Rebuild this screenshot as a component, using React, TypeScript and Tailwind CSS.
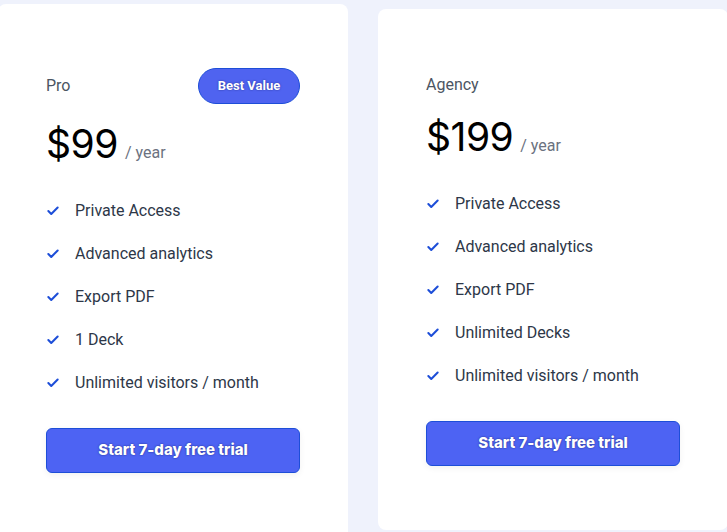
import { Check } from 'lucide-react';

/* ── Plan data ── */
const PLANS = [
  {
    name: 'Pro',
    price: '$99',
    badge: 'Best Value',
    features: ['Private Access', 'Advanced analytics', 'Export PDF', '1 Deck', 'Unlimited visitors / month'],
    card: 'mt-[4px] h-[560px]',
  },
  {
    name: 'Agency',
    price: '$199',
    badge: null,
    features: ['Private Access', 'Advanced analytics', 'Export PDF', 'Unlimited Decks', 'Unlimited visitors / month'],
    card: 'mt-[9px] h-[521px]',
  },
];

function PlanCard({ plan }: { plan: (typeof PLANS)[number] }) {
  return (
    <div className={`w-[350px] shrink-0 rounded-lg bg-white px-12 pt-16 ${plan.card}`}>
      <div className="flex items-center justify-between">
        <span className="text-base leading-6 text-[#4b5563]">{plan.name}</span>
        {plan.badge && (
          <span className="flex h-9 w-[102px] items-center justify-center rounded-full border border-[#1d4ed8] bg-[#4f63f0] text-[13px] font-bold text-white [text-shadow:0_0_2px_rgba(0,0,60,0.5)] [font-family:Roboto,sans-serif]">
            {plan.badge}
          </span>
        )}
      </div>

      <div className="mt-[16px] flex items-baseline">
        <span className="text-[39px] leading-[48px] tracking-[-0.5px] text-black [font-family:Inter,sans-serif]">{plan.price}</span>
        <span className="ml-[7px] text-base text-[#6b7280]">/ year</span>
      </div>

      <ul className="mt-[21px] flex flex-col">
        {plan.features.map((f) => (
          <li key={f} className="flex h-[43px] items-center gap-[15px]">
            <Check className="h-[14px] w-[14px] text-[#1d4ed8]" strokeWidth={3.5} />
            <span className="text-base text-[#2d3748]">{f}</span>
          </li>
        ))}
      </ul>

      <button className="mt-[24px] flex h-[45px] w-full items-center justify-center rounded-md border border-[#1d4ed8] bg-[#4d63f3] text-[15px] font-extrabold text-white shadow-[0_2px_6px_rgba(0,0,0,0.06)] [text-shadow:0_0_2px_rgba(0,0,60,0.6)] [font-family:Inter,sans-serif]">
        Start 7-day free trial
      </button>
    </div>
  );
}

export default function App() {
  return (
    <div className="h-[532px] w-[727px] overflow-hidden bg-[#eff2fc] [font-family:Roboto,sans-serif]">
      <div className="-ml-[2px] flex gap-[30px]">
        {PLANS.map((p) => (
          <PlanCard key={p.name} plan={p} />
        ))}
      </div>
    </div>
  );
}
